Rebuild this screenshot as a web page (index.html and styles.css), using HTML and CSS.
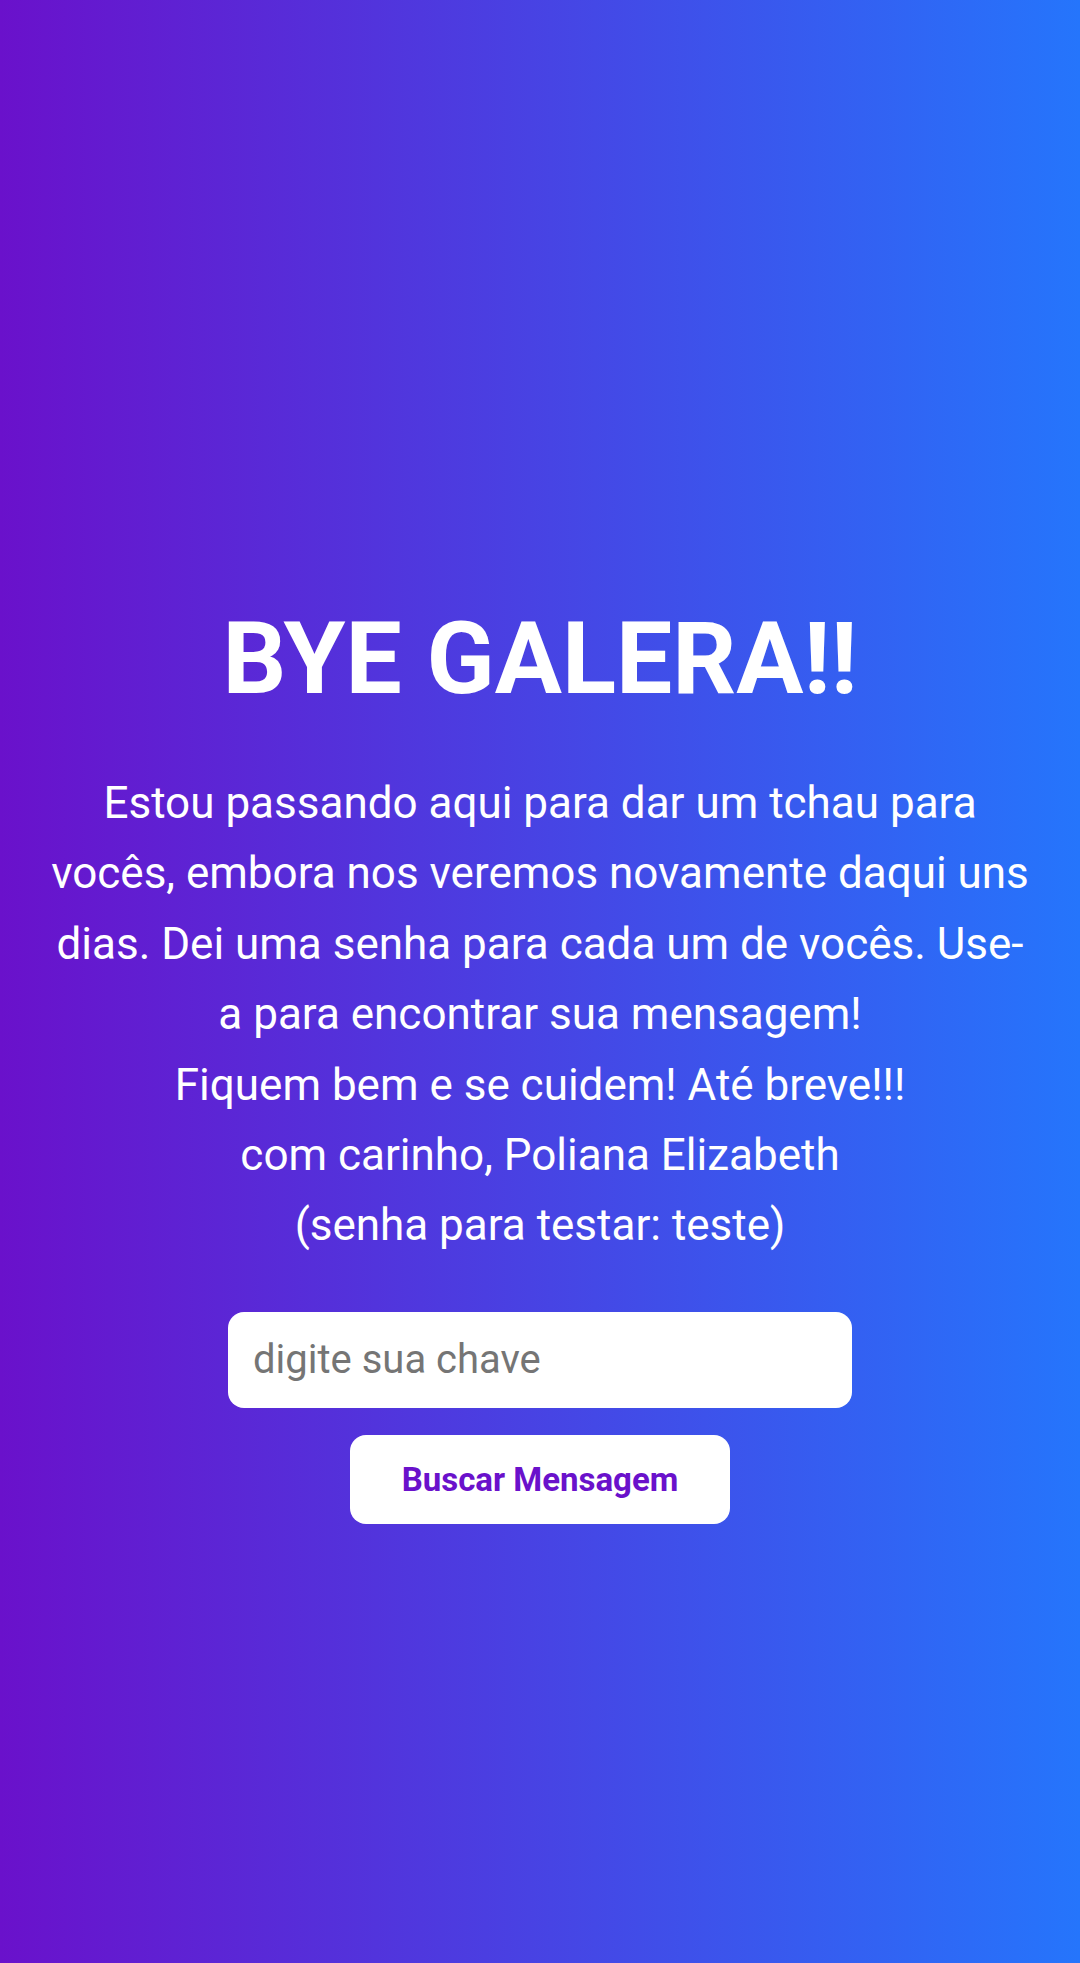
FILE: index.html
```html
<!DOCTYPE html>
<html lang="pt-BR">
<head>
<meta charset="utf-8">
<title>Bye Galera</title>
<link rel="stylesheet" href="styles.css">
</head>
<body>
<main class="page">
  <h1 class="title">BYE GALERA!!</h1>
  <p class="message">Estou passando aqui para dar um tchau para vocês, embora nos veremos novamente daqui uns dias. Dei uma senha para cada um de vocês. Use-a para encontrar sua mensagem!<br>Fiquem bem e se cuidem! Até breve!!!<br>com carinho, Poliana Elizabeth<br>(senha para testar: teste)</p>
  <form class="search">
    <input class="key" type="text" placeholder="digite sua chave">
    <button class="btn" type="button">Buscar Mensagem</button>
  </form>
</main>
</body>
</html>
```

FILE: styles.css
```css
html, body {
  margin: 0;
  padding: 0;
}
body {
  min-height: 1963px;
  background: linear-gradient(to right, #6a11cb, #2575fc);
  font-family: Roboto, "Noto Sans", Arial, sans-serif;
  color: #ffffff;
}
.page {
  display: flex;
  flex-direction: column;
  align-items: center;
  padding: 600px 40px 0;
  text-align: center;
}
.title {
  margin: 0;
  font-size: 100px;
  font-weight: 700;
  line-height: normal;
}
.message {
  margin: 51px 0 0;
  width: 986px;
  font-size: 44px;
  line-height: 1.6;
}
.search {
  margin-top: 51px;
  display: flex;
  flex-direction: column;
  align-items: center;
  gap: 27px;
}
.key {
  box-sizing: border-box;
  width: 624px;
  height: 96px;
  padding: 0 25px;
  border: none;
  border-radius: 16px;
  background: #ffffff;
  font-family: Roboto, "Noto Sans", Arial, sans-serif;
  font-size: 40px;
  color: #333;
  outline: none;
}
.key::placeholder {
  color: #757575;
}
.btn {
  width: 380px;
  height: 89px;
  border: none;
  border-radius: 16px;
  background: #ffffff;
  color: #6a11cb;
  font-family: Roboto, "Noto Sans", Arial, sans-serif;
  font-size: 33px;
  font-weight: 700;
  cursor: pointer;
}
```
